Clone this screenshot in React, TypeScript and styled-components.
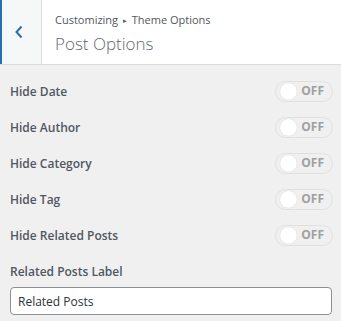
import styled, { createGlobalStyle } from 'styled-components';

const GlobalStyle = createGlobalStyle`
  html, body {
    margin: 0;
    padding: 0;
    background: #f0f0f1;
  }
  body {
    font-family: 'Open Sans', 'Noto Sans', sans-serif;
    -webkit-font-smoothing: antialiased;
  }
`;

const options = ['Hide Date', 'Hide Author', 'Hide Category', 'Hide Tag', 'Hide Related Posts'];

export default function App() {
  return (
    <Panel>
      <GlobalStyle />
      <Header>
        <BackButton aria-label="Back">
          <svg width="8" height="14" viewBox="0 0 8 14" fill="none" stroke="#2271b1" strokeWidth="2">
            <polyline points="6.5,1.5 1.5,7 6.5,12.5" />
          </svg>
        </BackButton>
        <TitleBlock>
          <Crumbs>
            Customizing <Arrow>▸</Arrow> Theme Options
          </Crumbs>
          <Title>Post Options</Title>
        </TitleBlock>
      </Header>

      <Content>
        {options.map(o => (
          <Row key={o}>
            <Label>{o}</Label>
            <Toggle>
              <Knob />
              <Off>OFF</Off>
            </Toggle>
          </Row>
        ))}
        <FieldLabel>Related Posts Label</FieldLabel>
        <TextInput type="text" defaultValue="Related Posts" />
      </Content>
    </Panel>
  );
}

const Panel = styled.div`
  width: 341px;
  min-height: 321px;
  background: #f0f0f1;
`;

const Header = styled.div`
  display: flex;
  height: 64px;
  background: #fff;
  border-bottom: 1px solid #dcdcde;
`;

const BackButton = styled.button`
  width: 42px;
  flex-shrink: 0;
  display: flex;
  align-items: center;
  justify-content: flex-start;
  padding: 0 0 0 13px;
  background: #f6f7f7;
  border: none;
  border-left: 2px solid #2271b1;
  border-right: 1px solid #dcdcde;
  box-sizing: border-box;
  cursor: pointer;
`;

const TitleBlock = styled.div`
  padding: 12px 0 0 13px;
  display: flex;
  flex-direction: column;
`;

const Crumbs = styled.span`
  font-size: 11px;
  line-height: 16px;
  color: #50575e;
`;

const Arrow = styled.span`
  font-size: 7px;
  vertical-align: 1px;
  margin: 0 2px;
`;

const Title = styled.h1`
  margin: 3px 0 0;
  font-size: 17px;
  font-weight: 300;
  line-height: 24px;
  color: #646970;
`;

const Content = styled.div`
  padding: 8px 8px 0 10px;
  display: flex;
  flex-direction: column;
`;

const Row = styled.div`
  display: flex;
  align-items: center;
  justify-content: space-between;
  height: 36px;
`;

const Label = styled.span`
  font-size: 12px;
  font-weight: 600;
  color: #50575e;
`;

const Toggle = styled.div`
  position: relative;
  width: 58px;
  height: 21px;
  box-sizing: border-box;
  border: 1px solid #e0e0e0;
  border-radius: 11px;
  background: #f0f0f0;
  display: flex;
  align-items: center;
  justify-content: flex-end;
  padding-right: 8px;
`;

const Knob = styled.span`
  position: absolute;
  left: 4px;
  top: 1px;
  width: 17px;
  height: 17px;
  border-radius: 50%;
  background: #fff;
  box-shadow: 0 0 1px rgba(0, 0, 0, 0.2);
`;

const Off = styled.span`
  font-size: 12px;
  font-weight: 700;
  color: #a0a0a0;
  line-height: 1;
  margin-top: -1px;
`;

const FieldLabel = styled.label`
  margin-top: 9px;
  font-size: 12px;
  font-weight: 600;
  line-height: 20px;
  color: #50575e;
`;

const TextInput = styled.input`
  margin-top: 5px;
  width: 322px;
  height: 28px;
  box-sizing: border-box;
  padding: 0 7px;
  border: 1px solid #8c8f94;
  border-radius: 4px;
  background: #fff;
  font-family: inherit;
  font-size: 12px;
  color: #2c3338;
  outline: none;
`;
